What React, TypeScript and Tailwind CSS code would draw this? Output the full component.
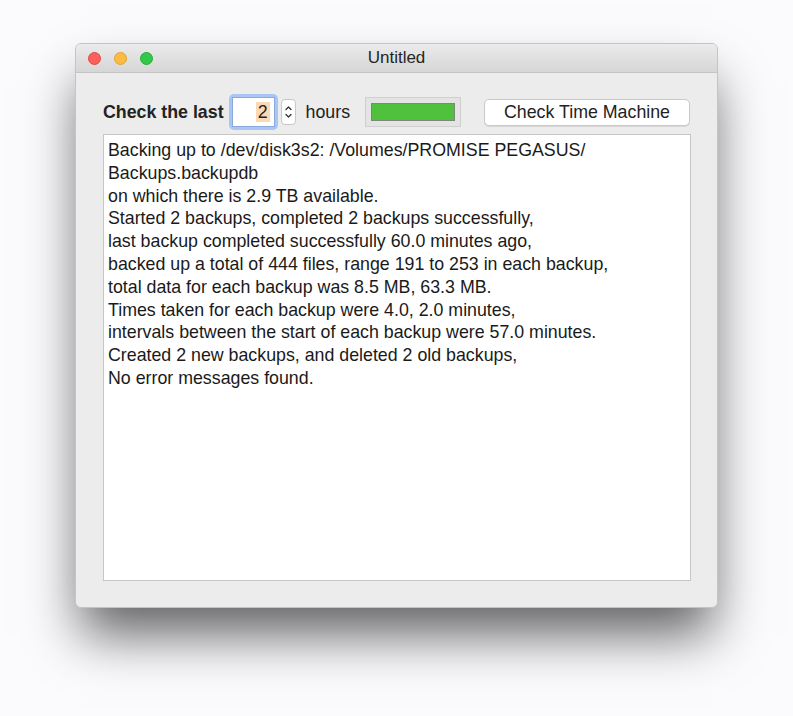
import React from 'react';

const lines = [
  'Backing up to /dev/disk3s2: /Volumes/PROMISE PEGASUS/',
  'Backups.backupdb',
  'on which there is 2.9 TB available.',
  'Started 2 backups, completed 2 backups successfully,',
  'last backup completed successfully 60.0 minutes ago,',
  'backed up a total of 444 files, range 191 to 253 in each backup,',
  'total data for each backup was 8.5 MB, 63.3 MB.',
  'Times taken for each backup were 4.0, 2.0 minutes,',
  'intervals between the start of each backup were 57.0 minutes.',
  'Created 2 new backups, and deleted 2 old backups,',
  'No error messages found.',
];

const App: React.FC = () => {
  return (
    <div className="min-h-screen bg-[#fbfafd] pt-[43px] pl-[75px] font-['Liberation_Sans',Arial,sans-serif]">
      <div className="w-[643px] h-[565px] rounded-[6px] bg-[#ececec] border border-[#c4c4c4] shadow-[0_32px_50px_-6px_rgba(0,0,0,0.62)] flex flex-col overflow-hidden">
        {/* Title bar */}
        <div className="h-[29px] shrink-0 bg-gradient-to-b from-[#ebebeb] to-[#d6d6d6] border-b border-[#c4c4c4] flex items-center relative">
          <div className="flex items-center gap-[13px] pl-[12px]">
            <span className="w-[13px] h-[13px] rounded-full bg-[#fc605c] border border-[#de4a46]" />
            <span className="w-[13px] h-[13px] rounded-full bg-[#fdbc40] border border-[#dea236]" />
            <span className="w-[13px] h-[13px] rounded-full bg-[#34c84a] border border-[#27aa35]" />
          </div>
          <div className="absolute inset-0 flex items-center justify-center text-[17px] text-[#262626]">
            Untitled
          </div>
        </div>

        {/* Controls */}
        <div className="flex items-center pl-[27px] pr-[27px] pt-[21px] h-[57px]">
          <span className="font-bold text-[17.8px] text-[#222]">Check the last</span>
          <div className="ml-[5px] w-[49px] h-[36px] rounded-[5px] bg-[#a9c6f3] p-[3px]">
            <div className="w-full h-full bg-white border border-[#8aa9dd] flex items-center justify-end pr-[4px]">
              <span className="text-[17.8px] text-[#222] bg-[#fbd9b5] px-[2px] leading-[20px]">2</span>
            </div>
          </div>
          <div className="ml-[3px] w-[15px] h-[26px] rounded-[4px] bg-white border border-[#c8c8c8] flex flex-col items-center justify-center">
            <svg width="9" height="20" viewBox="0 0 9 20" fill="none" stroke="#333" strokeWidth="1.3" strokeLinecap="round" strokeLinejoin="round">
              <path d="M2 7.5 L4.5 5 L7 7.5" />
              <path d="M2 12.5 L4.5 15 L7 12.5" />
            </svg>
          </div>
          <span className="ml-[10px] text-[17.8px] text-[#222]">hours</span>
          <div className="ml-[15px] w-[96px] h-[30px] bg-[#e4e4e4] border border-[#cfcfcf] flex items-center justify-center">
            <div className="w-[84px] h-[18px] bg-[#50c13c] border border-[#7b8a78]" />
          </div>
          <button className="ml-auto w-[206px] h-[27px] rounded-[5px] bg-white border border-[#c9c9c9] shadow-[0_1px_0_rgba(0,0,0,0.08)] text-[17.8px] text-[#222] flex items-center justify-center">
            Check Time Machine
          </button>
        </div>

        {/* Text view */}
        <div className="ml-[27px] mt-[4px] w-[588px] h-[447px] bg-white border border-[#c6c6c6] px-[4px] pt-[4px]">
          {lines.map((l, i) => (
            <div key={i} className="text-[17.8px] leading-[22.8px] text-[#1a1a1a] whitespace-nowrap">
              {l}
            </div>
          ))}
        </div>
      </div>
    </div>
  );
};

export default App;
